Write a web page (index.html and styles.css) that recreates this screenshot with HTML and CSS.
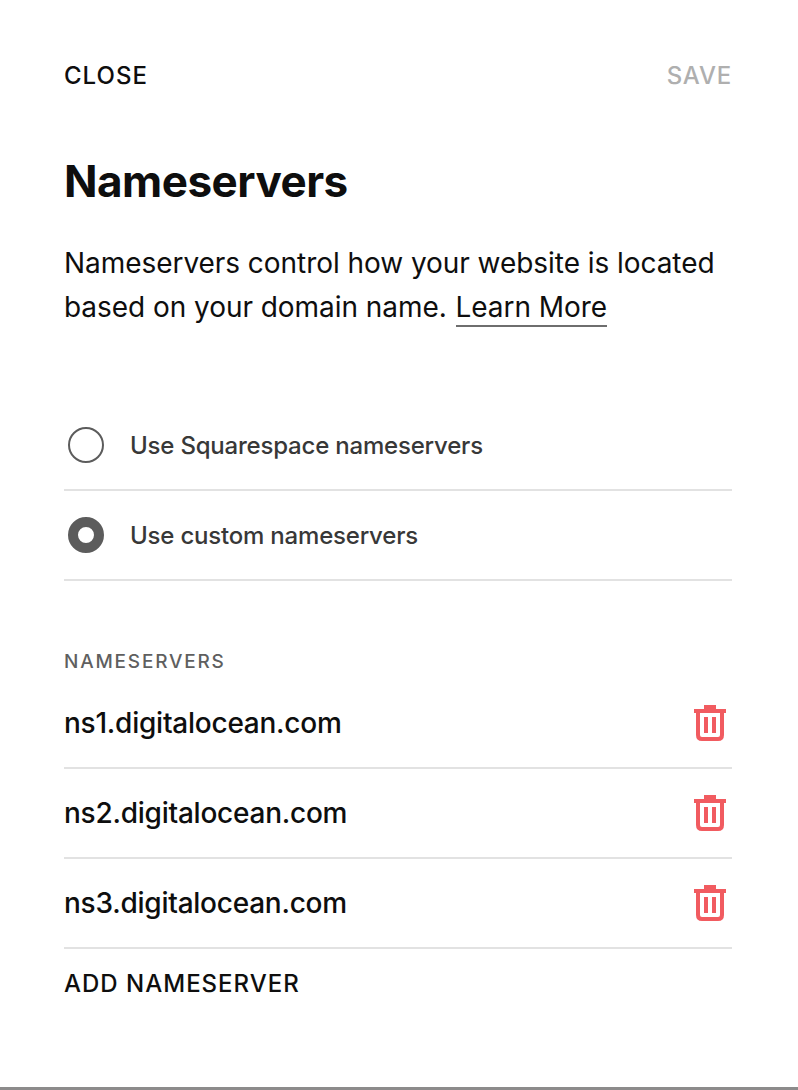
FILE: index.html
```html
<!DOCTYPE html>
<html lang="en">
<head>
<meta charset="utf-8">
<title>Nameservers</title>
<link rel="stylesheet" href="styles.css">
</head>
<body>
<main class="panel">
  <header class="bar">
    <button class="action close">Close</button>
    <button class="action save" disabled>Save</button>
  </header>
  <h1 class="title">Nameservers</h1>
  <p class="intro">Nameservers control how your website is located<br>based on your domain name. <a class="link">Learn More</a></p>
  <div class="options">
    <div class="row option"><span class="radio"></span><span>Use Squarespace nameservers</span></div>
    <div class="row option"><span class="radio selected"></span><span>Use custom nameservers</span></div>
  </div>
  <h2 class="label">Nameservers</h2>
  <div class="servers">
    <div class="row server"><span>ns1.digitalocean.com</span>
      <svg class="trash" viewBox="0 0 32 36"><path d="M0 4H10V0H22V4H32V8H0Z"/><path class="can" d="M4 7V30Q4 34 8 34H24Q28 34 28 30V7"/><path d="M10 12H14V28H10ZM18 12H22V28H18Z"/></svg></div>
    <div class="row server"><span>ns2.digitalocean.com</span>
      <svg class="trash" viewBox="0 0 32 36"><path d="M0 4H10V0H22V4H32V8H0Z"/><path class="can" d="M4 7V30Q4 34 8 34H24Q28 34 28 30V7"/><path d="M10 12H14V28H10ZM18 12H22V28H18Z"/></svg></div>
    <div class="row server"><span>ns3.digitalocean.com</span>
      <svg class="trash" viewBox="0 0 32 36"><path d="M0 4H10V0H22V4H32V8H0Z"/><path class="can" d="M4 7V30Q4 34 8 34H24Q28 34 28 30V7"/><path d="M10 12H14V28H10ZM18 12H22V28H18Z"/></svg></div>
  </div>
  <button class="action add">Add nameserver</button>
</main>
</body>
</html>
```
FILE: styles.css
```css
* { box-sizing: border-box; }
body {
  margin: 0;
  background: #fff;
  color: #0e0e0e;
  font-family: Inter, "Liberation Sans", sans-serif;
}
.panel {
  height: 1090px;
  padding: 60px 66px 0 64px;
  border-bottom: 3px solid #8c8b8b;
  white-space: nowrap;
}
.bar { display: flex; justify-content: space-between; height: 32px; }
.action {
  display: block;
  padding: 0;
  border: 0;
  background: none;
  color: inherit;
  font: 500 24px/32px Inter, "Liberation Sans", sans-serif;
  letter-spacing: 1px;
  text-transform: uppercase;
}
.save { color: #afafaf; letter-spacing: 0.8px; }
.title {
  margin: 61px 0 0;
  font-size: 44px;
  font-weight: 700;
  line-height: 56px;
  letter-spacing: -0.5px;
}
.intro {
  height: 88px;
  margin: 32px 0 0;
  font-size: 28px;
  line-height: 44px;
  letter-spacing: -0.05px;
}
.link {
  display: inline-block;
  height: 42px;
  margin-left: 1px;
  border-bottom: 2px solid #6e6e6e;
}
.options { margin-top: 72px; }
.row {
  display: flex;
  align-items: center;
  height: 90px;
  border-bottom: 2px solid #e2e2e2;
}
.option {
  gap: 26px;
  padding-left: 4px;
  color: #383838;
  font-size: 24px;
  font-weight: 450;
  letter-spacing: -0.2px;
}
.radio {
  width: 36px;
  height: 36px;
  border: 2px solid #5c5c5c;
  border-radius: 50%;
}
.selected { border-width: 10px; }
.label {
  margin: 69px 0 0;
  color: #5f5f5f;
  font-size: 19px;
  font-weight: 500;
  line-height: 24px;
  letter-spacing: 1.8px;
  text-transform: uppercase;
}
.servers { margin-top: 5px; }
.server {
  justify-content: space-between;
  padding-right: 6px;
  font-size: 28px;
  font-weight: 450;
  letter-spacing: -0.24px;
}
.trash { width: 32px; height: 36px; fill: #f15b60; }
.can { fill: none; stroke: #f15b60; stroke-width: 4; }
.add { margin-top: 19px; }
```
